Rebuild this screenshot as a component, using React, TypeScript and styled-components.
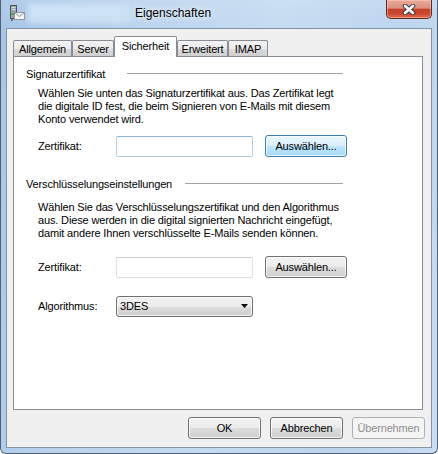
import React from "react";
import styled, { createGlobalStyle } from "styled-components";

const GlobalStyle = createGlobalStyle`
  html, body { margin: 0; padding: 0; background: #ffffff; }
  body {
    font-family: "Liberation Sans", Arial, sans-serif;
    font-size: 11px;
    letter-spacing: -0.15px;
    color: #000;
  }
  #root { width: 438px; height: 454px; }
`;

const Window = styled.div`
  box-sizing: border-box;
  width: 438px;
  height: 454px;
  display: flex;
  flex-direction: column;
  padding: 0 5px 5px 5px;
  border: 1px solid #56606d;
  border-top: none;
  border-radius: 0 0 6px 6px;
  background:
    linear-gradient(to bottom, rgba(255, 255, 255, 0.12), rgba(255, 255, 255, 0) 30px),
    linear-gradient(100deg, #a6c5e8 0%, #b9d2ee 25%, #c5dbf1 55%, #bcd4ee 80%, #c9ddf2 100%);
`;

const TitleBar = styled.div`
  flex: none;
  height: 28px;
  display: flex;
  align-items: flex-start;
`;

const AppIcon = styled.div`
  width: 16px;
  height: 16px;
  margin: 5px 0 0 3px;
  flex: none;
`;

const Redaction = styled.div`
  width: 102px;
  height: 19px;
  margin: 4px 0 0 3px;
  background: #cde1f5;
  filter: blur(2.5px);
  flex: none;
`;

const Title = styled.div`
  margin: 6px 0 0 5px;
  font-size: 12px;
  line-height: 15px;
  letter-spacing: 0;
  color: #000;
  text-shadow: 0 0 6px rgba(255, 255, 255, 0.95), 0 0 12px rgba(255, 255, 255, 0.8);
`;

const CloseButton = styled.div`
  margin-left: auto;
  box-sizing: border-box;
  width: 46px;
  height: 19px;
  display: flex;
  align-items: center;
  justify-content: center;
  border: 1px solid #5b2b25;
  border-top: none;
  border-radius: 0 0 5px 5px;
  background: linear-gradient(
    to bottom,
    #eaa99a 0%,
    #dc8f7e 45%,
    #c3432c 52%,
    #c8462d 75%,
    #e06c48 100%
  );
  box-shadow: inset 0 0 0 1px rgba(255, 215, 205, 0.45);
`;

const Client = styled.div`
  flex: 1;
  min-height: 0;
  box-sizing: border-box;
  display: flex;
  flex-direction: column;
  border: 1px solid #8693a2;
  background: #f0f0f0;
  padding: 7px 6px 8px 6px;
`;

const TabStrip = styled.div`
  flex: none;
  height: 20px;
  display: flex;
  align-items: flex-end;
  position: relative;
  z-index: 2;
`;

const Tab = styled.div<{ $active?: boolean; $w: number }>`
  box-sizing: border-box;
  width: ${(p) => p.$w}px;
  height: ${(p) => (p.$active ? 21 : 16)}px;
  margin-bottom: ${(p) => (p.$active ? -1 : 0)}px;
  padding-bottom: ${(p) => (p.$active ? 3 : 0)}px;
  display: flex;
  align-items: center;
  justify-content: center;
  border: 1px solid #898c95;
  border-bottom: none;
  border-radius: 2px 2px 0 0;
  background: ${(p) =>
    p.$active
      ? "#ffffff"
      : "linear-gradient(to bottom, #f2f2f2 0%, #ebebeb 50%, #dddddd 50%, #cfcfcf 100%)"};
  white-space: nowrap;
`;

const Panel = styled.div`
  flex: none;
  box-sizing: border-box;
  height: 354px;
  margin-right: 2px;
  padding: 11px 0 0 12px;
  background: #ffffff;
  border: 1px solid #898c95;
  position: relative;
  z-index: 1;
`;

const HeadingRow = styled.div<{ $ruleFrom: number; $top: number }>`
  width: 317px;
  height: 13px;
  margin-top: ${(p) => p.$top}px;
  display: grid;
  grid-template-columns: ${(p) => p.$ruleFrom}px 1fr;
  line-height: 13px;
  white-space: nowrap;
`;

const Rule = styled.div`
  align-self: start;
  margin-top: 5px;
  height: 1px;
  background: #a0a0a0;
`;

const Description = styled.div<{ $top: number }>`
  margin: ${(p) => p.$top}px 0 0 12px;
  line-height: 13px;
`;

const Line = styled.span`
  display: block;
  white-space: nowrap;
`;

const FieldRow = styled.div<{ $top: number }>`
  margin: ${(p) => p.$top}px 0 0 12px;
  height: 22px;
  display: grid;
  grid-template-columns: 78px 149px 82px;
  align-items: center;
`;

const FieldLabel = styled.div`
  line-height: 13px;
  white-space: nowrap;
`;

const TextBox = styled.div<{ $hot?: boolean }>`
  box-sizing: border-box;
  width: 137px;
  height: 21px;
  background: #ffffff;
  border: 1px solid ${(p) => (p.$hot ? "#b3cde8" : "#dde1e6")};
  border-top-color: ${(p) => (p.$hot ? "#8eb1d8" : "#c9ccd2")};
  border-radius: 2px;
`;

const Button = styled.div<{ $variant?: "default" | "normal" | "disabled"; $w?: number }>`
  box-sizing: border-box;
  width: ${(p) => (p.$w ? `${p.$w}px` : "auto")};
  height: 22px;
  display: flex;
  align-items: center;
  justify-content: center;
  border-radius: 3px;
  white-space: nowrap;
  border: 1px solid
    ${(p) =>
      p.$variant === "default" ? "#3c7fb1" : p.$variant === "disabled" ? "#adb2b5" : "#707070"};
  color: ${(p) => (p.$variant === "disabled" ? "#8d8d8d" : "#000")};
  background: ${(p) =>
    p.$variant === "default"
      ? "linear-gradient(to bottom, #eaf6fd 0%, #d9f0fc 50%, #bee6fd 50%, #a7d9f5 100%)"
      : p.$variant === "disabled"
      ? "#f4f4f4"
      : "linear-gradient(to bottom, #f2f2f2 0%, #ebebeb 50%, #dddddd 50%, #cfcfcf 100%)"};
  box-shadow: ${(p) =>
    p.$variant === "disabled" ? "none" : "inset 0 0 0 1px rgba(255, 255, 255, 0.75)"};
`;

const Select = styled.div`
  box-sizing: border-box;
  width: 137px;
  height: 21px;
  display: flex;
  align-items: center;
  justify-content: space-between;
  padding: 0 4px 0 3px;
  border: 1px solid #707070;
  border-radius: 3px;
  background: linear-gradient(to bottom, #f2f2f2 0%, #ebebeb 50%, #dddddd 50%, #cfcfcf 100%);
  box-shadow: inset 0 0 0 1px rgba(255, 255, 255, 0.75);
`;

const ButtonRow = styled.div`
  flex: none;
  margin-top: 7px;
  display: flex;
  justify-content: flex-end;
  gap: 9px;
`;

const MailIcon = () => (
  <svg width="16" height="16" viewBox="0 0 16 16">
    <rect x="1.5" y="0.5" width="6" height="13" fill="#9aa1a8" stroke="#4d535a" />
    <rect x="2.5" y="2" width="4" height="1" fill="#d9dde1" />
    <rect x="2.5" y="4" width="4" height="1" fill="#d9dde1" />
    <rect x="2.5" y="8" width="3" height="2" fill="#3fae4c" />
    <rect x="2" y="14" width="2" height="2" fill="#6c737a" />
    <rect x="5.5" y="7.5" width="10" height="7" fill="#f6f6f6" stroke="#8d949b" />
    <path d="M5.5 7.5 L10.5 11.5 L15.5 7.5" fill="none" stroke="#8d949b" />
  </svg>
);

const CloseGlyph = () => (
  <svg width="14" height="11" viewBox="0 0 14 11">
    <path d="M3 2 L11 9 M11 2 L3 9" stroke="#3f3f3f" strokeWidth="4.6" strokeLinecap="round" />
    <path d="M3 2 L11 9 M11 2 L3 9" stroke="#ffffff" strokeWidth="2.6" strokeLinecap="round" />
  </svg>
);

const DropArrow = () => (
  <svg width="7" height="4" viewBox="0 0 7 4">
    <path d="M0 0 L7 0 L3.5 4 Z" fill="#000" />
  </svg>
);

const tabs = [
  { label: "Allgemein", w: 59 },
  { label: "Server", w: 42 },
  { label: "Sicherheit", w: 63, active: true },
  { label: "Erweitert", w: 51 },
  { label: "IMAP", w: 40 },
];

export default function App() {
  return (
    <>
      <GlobalStyle />
      <Window>
        <TitleBar>
          <AppIcon>
            <MailIcon />
          </AppIcon>
          <Redaction />
          <Title>Eigenschaften</Title>
          <CloseButton>
            <CloseGlyph />
          </CloseButton>
        </TitleBar>
        <Client>
          <TabStrip>
            {tabs.map((t) => (
              <Tab key={t.label} $w={t.w} $active={t.active}>
                {t.label}
              </Tab>
            ))}
          </TabStrip>
          <Panel>
            <HeadingRow $ruleFrom={101} $top={0}>
              <span>Signaturzertifikat</span>
              <Rule />
            </HeadingRow>
            <Description $top={6}>
              <Line>Wählen Sie unten das Signaturzertifikat aus. Das Zertifikat legt</Line>
              <Line>die digitale ID fest, die beim Signieren von E-Mails mit diesem</Line>
              <Line>Konto verwendet wird.</Line>
            </Description>
            <FieldRow $top={9}>
              <FieldLabel>Zertifikat:</FieldLabel>
              <TextBox $hot />
              <Button $variant="default">Auswählen...</Button>
            </FieldRow>

            <HeadingRow $ruleFrom={159} $top={21}>
              <span>Verschlüsselungseinstellungen</span>
              <Rule />
            </HeadingRow>
            <Description $top={10}>
              <Line>Wählen Sie das Verschlüsselungszertifikat und den Algorithmus</Line>
              <Line>aus. Diese werden in die digital signierten Nachricht eingefügt,</Line>
              <Line>damit andere Ihnen verschlüsselte E-Mails senden können.</Line>
            </Description>
            <FieldRow $top={16}>
              <FieldLabel>Zertifikat:</FieldLabel>
              <TextBox />
              <Button $variant="normal">Auswählen...</Button>
            </FieldRow>
            <FieldRow $top={17}>
              <FieldLabel>Algorithmus:</FieldLabel>
              <Select>
                <span>3DES</span>
                <DropArrow />
              </Select>
            </FieldRow>
          </Panel>
          <ButtonRow>
            <Button $variant="normal" $w={73}>OK</Button>
            <Button $variant="normal" $w={73}>Abbrechen</Button>
            <Button $variant="disabled" $w={73}>Übernehmen</Button>
          </ButtonRow>
        </Client>
      </Window>
    </>
  );
}
